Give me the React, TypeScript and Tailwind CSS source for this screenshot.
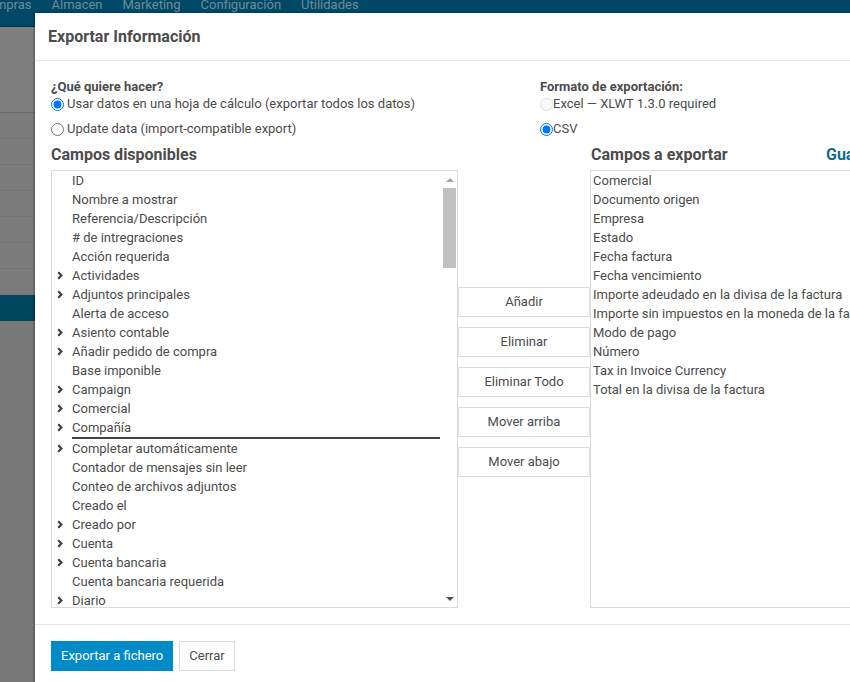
import React from 'react'

const font = { fontFamily: 'Roboto, "Noto Sans", Arial, sans-serif' }

const disponibles: [string, boolean][] = [
  ['ID', false],
  ['Nombre a mostrar', false],
  ['Referencia/Descripción', false],
  ['# de intregraciones', false],
  ['Acción requerida', false],
  ['Actividades', true],
  ['Adjuntos principales', true],
  ['Alerta de acceso', false],
  ['Asiento contable', true],
  ['Añadir pedido de compra', true],
  ['Base imponible', false],
  ['Campaign', true],
  ['Comercial', true],
  ['Compañía', true],
  ['Completar automáticamente', true],
  ['Contador de mensajes sin leer', false],
  ['Conteo de archivos adjuntos', false],
  ['Creado el', false],
  ['Creado por', true],
  ['Cuenta', true],
  ['Cuenta bancaria', true],
  ['Cuenta bancaria requerida', false],
  ['Diario', true],
]

const aExportar = [
  'Comercial',
  'Documento origen',
  'Empresa',
  'Estado',
  'Fecha factura',
  'Fecha vencimiento',
  'Importe adeudado en la divisa de la factura',
  'Importe sin impuestos en la moneda de la factura',
  'Modo de pago',
  'Número',
  'Tax in Invoice Currency',
  'Total en la divisa de la factura',
]

const acciones = ['Añadir', 'Eliminar', 'Eliminar Todo', 'Mover arriba', 'Mover abajo']

function Chevron() {
  return (
    <svg width="6" height="9" viewBox="0 0 6 9" className="block">
      <path d="M1.2 1.2 4.4 4.5 1.2 7.8" fill="none" stroke="#3f3f3f" strokeWidth="2.2" />
    </svg>
  )
}

function Radio({ checked, disabled }: { checked?: boolean; disabled?: boolean }) {
  return (
    <input
      type="radio"
      checked={!!checked}
      disabled={disabled}
      readOnly
      className={disabled ? 'w-[13px] h-[13px] shrink-0 opacity-60' : 'w-[13px] h-[13px] shrink-0'}
    />
  )
}

function Background() {
  const rows = [0, 1, 2, 3, 4, 5, 6]
  return (
    <div className="w-full h-full flex flex-col bg-[#787878]">
      <div className="h-[27px] bg-[#004866] border-b border-[#003448] overflow-hidden">
        <div className="flex gap-[20px] -mt-[5px] ml-[-21px] text-[13px] text-[#6f8b98]">
          <span>Compras</span>
          <span>Almacen</span>
          <span>Marketing</span>
          <span>Configuración</span>
          <span>Utilidades</span>
        </div>
      </div>
      <div className="h-[86px] bg-[#7f7f7f] border-b border-[#6b6b6b]" />
      {rows.map((r) => (
        <div key={r} className="h-[26px] bg-[#7b7b7b] border-b border-[#747474]" />
      ))}
      <div className="h-[26px] bg-[#00465e]" />
      <div className="flex-1 bg-[#777877]" />
    </div>
  )
}

export default function App() {
  return (
    <div className="relative w-[850px] h-[682px] overflow-hidden text-[#4c4c4c]" style={font}>
      <Background />

      {/* modal */}
      <div className="absolute left-[35px] top-[13px] w-[900px] h-[700px] bg-white shadow-[-1px_0_2px_rgba(0,0,0,0.35)] flex flex-col">
        <div className="h-[48px] border-b border-[#e5e5e5] pl-[13px] flex items-center">
          <h4 className="text-[16px] font-bold text-[#4c4c4c]">Exportar Información</h4>
        </div>

        <div className="pl-[16px] pt-[18px] pb-[16px] border-b border-[#e5e5e5]">
          <div className="flex text-[13px]">
            <div className="w-[489px] shrink-0">
              <div className="h-[16px] leading-[16px] font-bold">¿Qué quiere hacer?</div>
              <label className="h-[18px] flex items-center gap-[3px]">
                <Radio checked />
                <span>Usar datos en una hoja de cálculo (exportar todos los datos)</span>
              </label>
              <label className="h-[18px] mt-[7px] flex items-center gap-[3px]">
                <Radio />
                <span>Update data (import-compatible export)</span>
              </label>
            </div>
            <div>
              <div className="h-[16px] leading-[16px] font-bold">Formato de exportación:</div>
              <label className="h-[18px] flex items-center">
                <Radio disabled />
                <span>Excel — XLWT 1.3.0 required</span>
              </label>
              <label className="h-[18px] mt-[7px] flex items-center">
                <Radio checked />
                <span>CSV</span>
              </label>
            </div>
          </div>

          <div className="flex mt-[7px] h-[20px] items-center text-[16px] font-bold whitespace-nowrap">
            <div className="w-[540px] shrink-0">Campos disponibles</div>
            <div className="w-[235px] shrink-0">Campos a exportar</div>
            <div className="shrink-0 text-[#0f6c92]">Guardar lista de campos</div>
          </div>

          <div className="flex mt-[5px] h-[438px] text-[13px]">
            {/* disponibles */}
            <div className="w-[407px] shrink-0 border border-[#dcdcdc] flex">
              <div className="flex-1 overflow-hidden">
                {disponibles.map(([label, more]) => (
                  <React.Fragment key={label}>
                    <div className="h-[19px] flex items-center whitespace-nowrap">
                      <div className="w-[20px] pl-[5px]">{more && <Chevron />}</div>
                      <span>{label}</span>
                    </div>
                    {label === 'Compañía' && <div className="h-[2px] bg-[#444] ml-[20px] mr-[2px]" />}
                  </React.Fragment>
                ))}
              </div>
              <div className="w-[15px] flex flex-col">
                <div className="h-[17px] flex items-center justify-center">
                  <div className="w-0 h-0 border-l-[4px] border-r-[4px] border-b-[4px] border-l-transparent border-r-transparent border-b-[#a3a3a3]" />
                </div>
                <div className="h-[80px] mx-[1px] bg-[#c1c1c1]" />
                <div className="flex-1" />
                <div className="h-[17px] flex items-center justify-center">
                  <div className="w-0 h-0 border-l-[4px] border-r-[4px] border-t-[4px] border-l-transparent border-r-transparent border-t-[#505050]" />
                </div>
              </div>
            </div>

            {/* botones */}
            <div className="w-[132px] shrink-0 pt-[117px] flex flex-col gap-[10px]">
              {acciones.map((a) => (
                <button key={a} className="h-[30px] border border-[#dcdcdc] bg-white text-[13px] text-[#4c4c4c]">
                  {a}
                </button>
              ))}
            </div>

            {/* a exportar */}
            <div className="flex-1 border border-[#dcdcdc] pl-[2px] overflow-hidden">
              {aExportar.map((f) => (
                <div key={f} className="h-[19px] flex items-center whitespace-nowrap">
                  {f}
                </div>
              ))}
            </div>
          </div>
        </div>

        <div className="pl-[16px] pt-[16px] flex gap-[6px] text-[13px]">
          <button className="h-[30px] px-[10px] bg-[#008bc8] text-white">Exportar a fichero</button>
          <button className="h-[30px] px-[9px] bg-white border border-[#dcdcdc] text-[#4c4c4c]">Cerrar</button>
        </div>
      </div>
    </div>
  )
}
